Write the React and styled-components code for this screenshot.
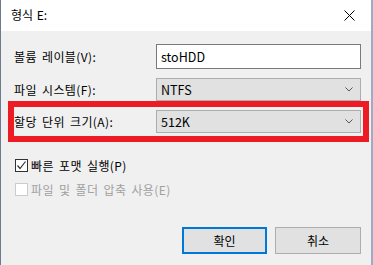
import React from "react";
import styled, { createGlobalStyle } from "styled-components";

const Global = createGlobalStyle`
  html, body { margin: 0; padding: 0; background: #f0f0f0; }
  body { font-family: "Noto Sans CJK KR", "Noto Sans", sans-serif; font-size: 12px; color: #000; }
`;

const Window = styled.div`
  position: relative;
  box-sizing: border-box;
  width: 373px;
  height: 265px;
  background: #f0f0f0;
  border-left: 1px solid #6e7b8e;
  border-right: 2px solid #9eabc2;
  display: flex;
  flex-direction: column;
  overflow: hidden;
`;

const TitleBar = styled.div`
  height: 31px;
  flex: none;
  background: #fff;
  display: flex;
  align-items: center;
  justify-content: space-between;
  padding: 0 8px 0 10px;
`;

const Title = styled.span`
  font-size: 12px;
  line-height: 1;
  margin-top: -1px;
  word-spacing: 1px;
`;

const CloseBtn = styled.div`
  width: 28px;
  height: 28px;
  display: flex;
  align-items: center;
  justify-content: center;
  margin-top: -1px;
`;

const Body = styled.div`
  flex: 1;
  display: flex;
  flex-direction: column;
  padding: 13px 10px 0 13px;
`;

const Form = styled.div`
  display: grid;
  grid-template-columns: 142px 205px;
  grid-template-rows: 25px 23px 23px;
  row-gap: 9px;
  align-items: center;
`;

const Label = styled.span`
  line-height: 1;
  margin-top: 1px;
  letter-spacing: 0.4px;
  word-spacing: 2px;
`;

const TextBox = styled.div`
  box-sizing: border-box;
  height: 25px;
  border: 1px solid #7a7a7a;
  background: #fff;
  display: flex;
  align-items: center;
  padding-left: 4px;
  font-size: 12.5px;
`;

const Select = styled.div`
  box-sizing: border-box;
  height: 23px;
  border: 1px solid #adadad;
  background: #e1e1e1;
  display: flex;
  align-items: center;
  justify-content: space-between;
  padding: 0 7px 0 4px;
  font-size: 12.5px;
`;

const Checks = styled.div`
  display: flex;
  flex-direction: column;
  gap: 11px;
  margin-top: 26px;
  padding-left: 1px;
`;

const CheckRow = styled.label`
  display: flex;
  align-items: center;
  gap: 3px;
  height: 13px;
  letter-spacing: 0.4px;
  word-spacing: 2px;
  color: ${(p) => (p.disabled ? "#a0a0a0" : "#000")};
`;

const Box = styled.span`
  box-sizing: border-box;
  width: 13px;
  height: 13px;
  flex: none;
  border: 1px solid ${(p) => (p.disabled ? "#cccccc" : "#333")};
  background: #fff;
  display: flex;
  align-items: center;
  justify-content: center;
`;

const Buttons = styled.div`
  display: flex;
  justify-content: flex-end;
  gap: 8px;
  margin-top: 31px;
`;

const Button = styled.div`
  box-sizing: border-box;
  width: ${(p) => (p.primary ? "85px" : "86px")};
  height: 27px;
  background: #e1e1e1;
  border: ${(p) => (p.primary ? "2px solid #0078d7" : "1px solid #adadad")};
  display: flex;
  align-items: center;
  justify-content: center;
  font-size: 12px;
`;

const Highlight = styled.div`
  position: absolute;
  left: 7px;
  top: 101px;
  width: 361px;
  height: 41px;
  box-sizing: border-box;
  border: 6px solid #ed1c24;
  pointer-events: none;
`;

const Chevron = () => (
  <svg width="8" height="5" viewBox="0 0 8 5">
    <path d="M0.5 0.5 L4 4 L7.5 0.5" fill="none" stroke="#555" strokeWidth="1" />
  </svg>
);

export default function App() {
  return (
    <>
      <Global />
      <Window>
        <TitleBar>
          <Title>형식 E:</Title>
          <CloseBtn>
            <svg width="11" height="11" viewBox="0 0 11 11">
              <path d="M0.5 0.5 L10.5 10.5 M10.5 0.5 L0.5 10.5" stroke="#000" strokeWidth="1" />
            </svg>
          </CloseBtn>
        </TitleBar>
        <Body>
          <Form>
            <Label>볼륨 레이블(V):</Label>
            <TextBox>stoHDD</TextBox>
            <Label>파일 시스템(F):</Label>
            <Select>
              NTFS
              <Chevron />
            </Select>
            <Label>할당 단위 크기(A):</Label>
            <Select>
              512K
              <Chevron />
            </Select>
          </Form>
          <Checks>
            <CheckRow>
              <Box>
                <svg width="11" height="11" viewBox="0 0 11 11">
                  <path d="M1.5 5.5 L4 8.5 L9.5 1.5" fill="none" stroke="#333" strokeWidth="1.2" />
                </svg>
              </Box>
              빠른 포맷 실행(P)
            </CheckRow>
            <CheckRow disabled>
              <Box disabled />
              파일 및 폴더 압축 사용(E)
            </CheckRow>
          </Checks>
          <Buttons>
            <Button primary>확인</Button>
            <Button>취소</Button>
          </Buttons>
        </Body>
        <Highlight />
      </Window>
    </>
  );
}
